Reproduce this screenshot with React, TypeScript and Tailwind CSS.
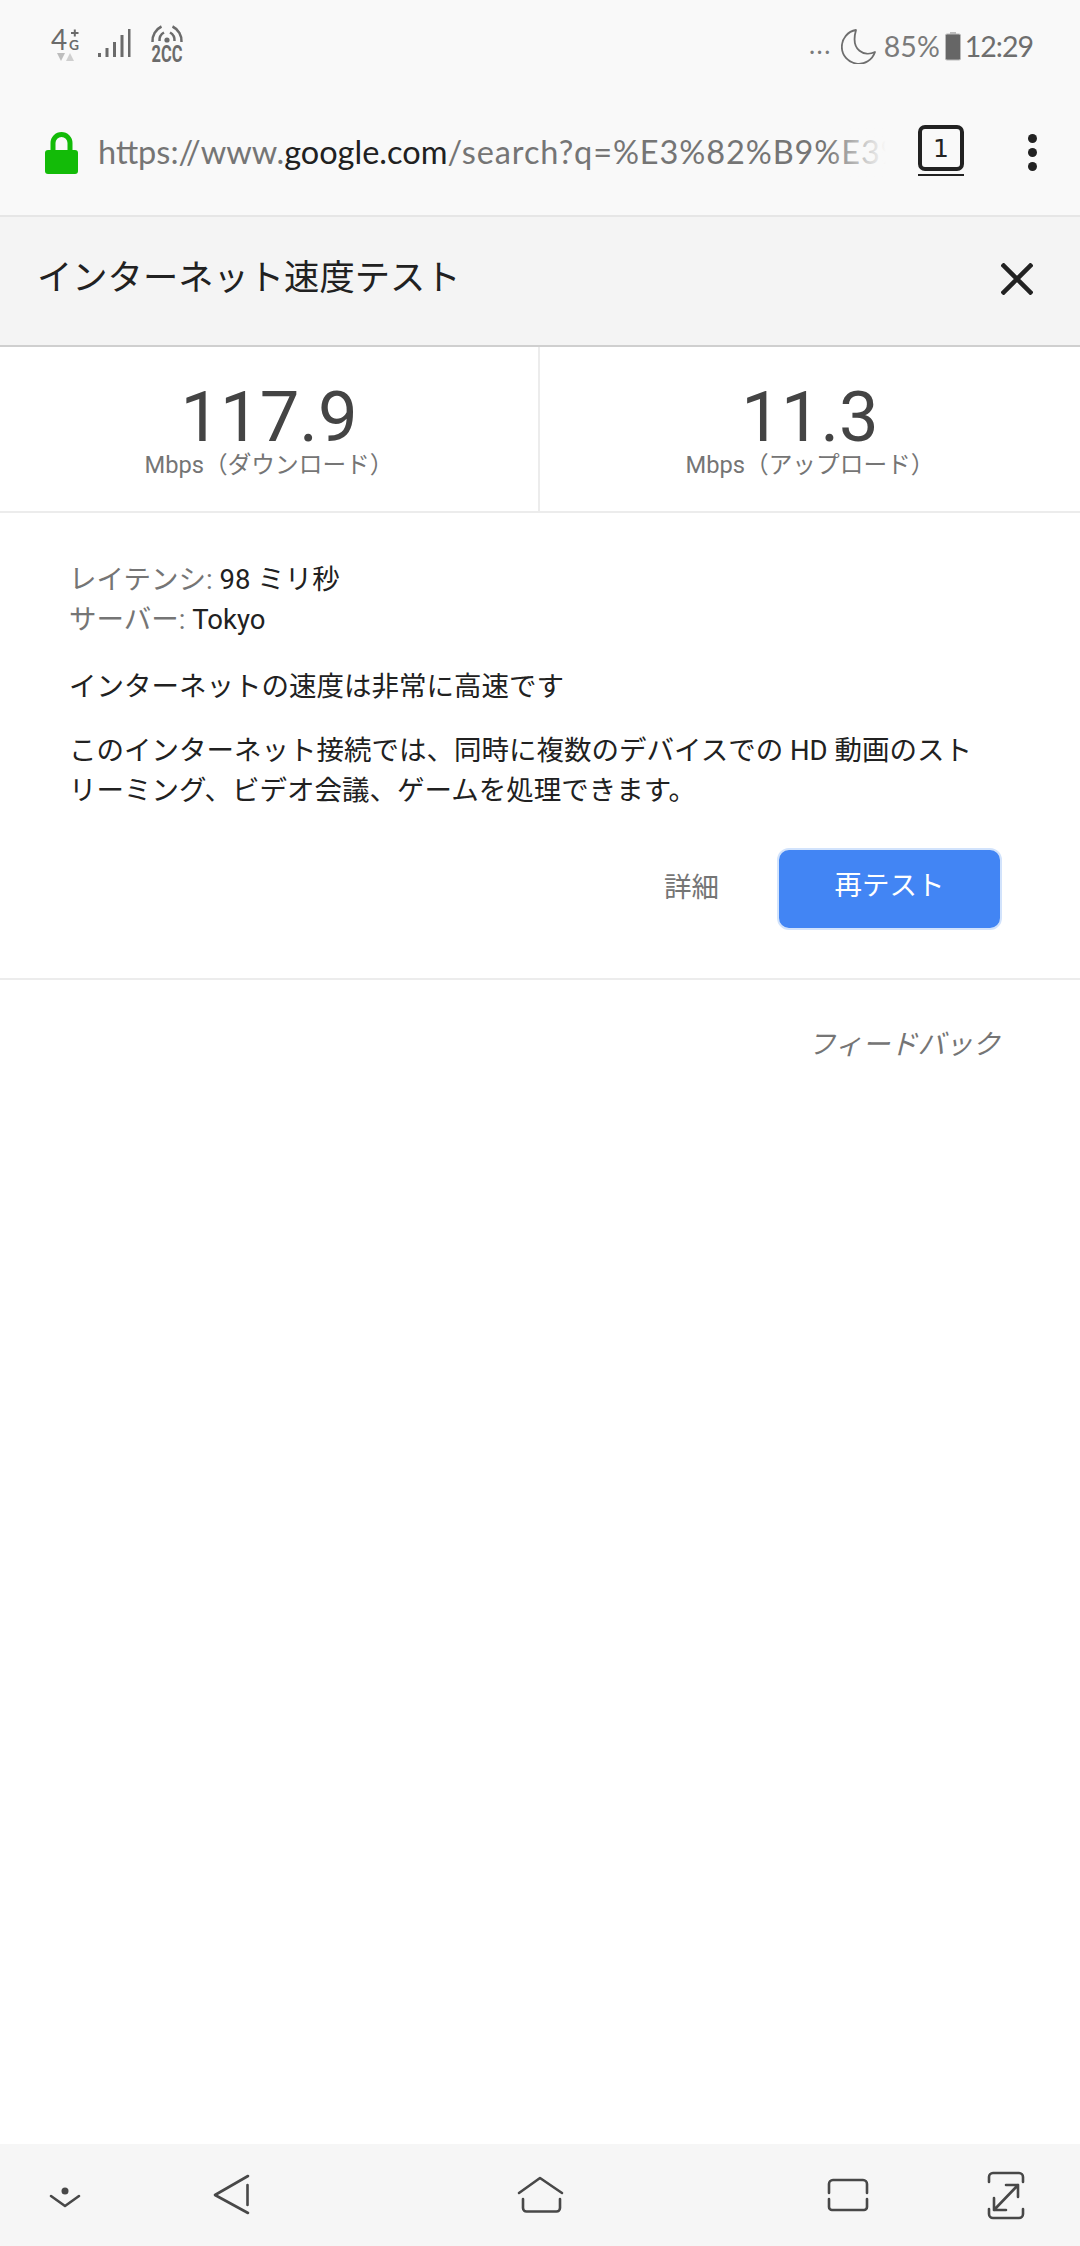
import React from 'react';

const BAR_FONT = "font-['Lato','Noto_Sans',sans-serif]";

const NetworkIcons = () => (
  <svg width="140" height="40" viewBox="0 0 140 40" className="shrink-0 overflow-visible text-[#6b6b6b]">
    <text x="0" y="24" fontSize="28" fontFamily="Lato" fill="currentColor">4</text>
    <text x="18" y="24" fontSize="14" fontWeight="700" fontFamily="Lato" fill="currentColor" textLength="10" lengthAdjust="spacingAndGlyphs">G</text>
    <path d="M20 7h7.500M23.800 3.500v7" stroke="currentColor" strokeWidth="2" />
    <path d="M6 27h8l-4 8z" fill="#bdbdbd" />
    <path d="M15 35h8l-4-8z" fill="#cfcfcf" />
    <g fill="#6b6b6b">
      <rect x="47" y="27" width="3" height="4" />
      <rect x="54.500" y="22" width="3" height="9" />
      <rect x="62" y="16" width="3" height="15" />
      <rect x="69.500" y="9" width="3" height="22" />
      <rect x="77" y="3" width="2.500" height="28" />
    </g>
    <circle cx="116" cy="14" r="2.600" fill="currentColor" />
    <path d="M108.500 15a9 9 0 0 1 4.500-8.500M123.500 15a9 9 0 0 0-4.500-8.500M101.500 16a16 16 0 0 1 9-15.500M130.500 16a16 16 0 0 0-9-15.500" fill="none" stroke="currentColor" strokeWidth="2.500" />
    <text x="100.500" y="36" fontSize="24" fontWeight="700" fontFamily="Roboto" fill="currentColor" textLength="31" lengthAdjust="spacingAndGlyphs">2CC</text>
  </svg>
);

const StatusBar = () => (
  <div className={`flex h-[92px] items-center justify-between pl-[51px] pr-[47px] ${BAR_FONT}`}>
    <NetworkIcons />
    <div className="flex items-center text-[28.500px] text-[#7b7b7b]">
      <span className="mt-[-4px] text-[26px] tracking-[1.500px]">...</span>
      <svg width="36" height="36" viewBox="0 0 36 36" className="ml-[9px]">
        <path d="M15 2A17 17 0 1 0 34 24C24 29 9 23 15 2Z" fill="none" stroke="#6e6e6e" strokeWidth="1.800" strokeLinejoin="round" />
      </svg>
      <span className="ml-[7px]">85%</span>
      <svg width="18" height="30" viewBox="0 0 18 30" className="ml-[4px]">
        <path d="M6 1h6v2H6z" fill="#bbb" />
        <rect x="1.500" y="3" width="15" height="26" rx="1.500" fill="#666" stroke="#bbb" strokeWidth="1" />
      </svg>
      <span className="ml-[3px] tracking-[-1px] text-[#6e6e6e]">12:29</span>
    </div>
  </div>
);

const UrlBar = () => (
  <div className={`flex h-[125px] items-start border-b-2 border-[#e6e6e6] pl-[45px] ${BAR_FONT}`}>
    <svg width="33" height="43" viewBox="0 0 33 43" className="mt-[39px] shrink-0">
      <path d="M8 20V12a8.500 8.500 0 0 1 17 0v8" fill="none" stroke="#13bb08" strokeWidth="5" />
      <rect x="0" y="19" width="33" height="24" rx="3" fill="#13bb08" />
    </svg>
    <div className="relative ml-[20px] mt-[35px] h-[50px] w-[788px] overflow-hidden whitespace-nowrap text-[32.500px] leading-[50px] text-[#757575]">
      https://www.<span className="text-[#212121]">google.com</span>
      <span className="tracking-[0.900px]">/search?q=%E3%82%B9%E3%9</span>
      <div className="absolute inset-y-0 right-0 w-[60px] bg-gradient-to-r from-transparent to-[#f9f9f9]" />
    </div>
    <div className="ml-[32px] mt-[33px] w-[46px] shrink-0">
      <div className="flex h-[46px] w-[46px] items-center justify-center rounded-[7px] border-[4px] border-[#222] font-['DejaVu_Sans',sans-serif] text-[25px] leading-none text-[#222]">1</div>
      <div className="mt-[3px] h-[2px] bg-[#222]" />
    </div>
    <div className="ml-[64px] mt-[42px] flex shrink-0 flex-col gap-[5px]">
      <div className="h-[9px] w-[9px] rounded-full bg-[#222]" />
      <div className="h-[9px] w-[9px] rounded-full bg-[#222]" />
      <div className="h-[9px] w-[9px] rounded-full bg-[#222]" />
    </div>
  </div>
);

const TitleBar = () => (
  <div className="flex h-[130px] items-center justify-between border-b-2 border-[#cfcfcf] bg-[#f4f4f4] pl-[37px] pr-[47px]">
    <h1 className="pb-[6px] text-[35.300px] font-normal leading-[48px] text-[#212121]">インターネット速度テスト</h1>
    <svg width="32" height="32" viewBox="0 0 32 32" className="mb-[4px] text-[#222]" fill="none" stroke="currentColor" strokeWidth="4.500">
      <path d="M1 1l30 30M31 1L1 31" />
    </svg>
  </div>
);

const Stat = ({ value, label, border }: { value: string; label: string; border?: boolean }) => (
  <div className={`flex flex-col items-center pt-[38px] ${border ? 'border-r-2 border-[#ececec]' : ''}`}>
    <div className="text-[70.500px] leading-[64px] text-[#444444]">{value}</div>
    <div className="text-[23.700px] leading-[32px] text-[#757575]">{label}</div>
  </div>
);

const Details = () => (
  <div className="pl-[69px] pt-[47px] text-[27.500px] leading-[40px] text-[#212121]">
    <div>
      <span className="text-[#757575]">レイテンシ: </span>98 ミリ秒
    </div>
    <div>
      <span className="text-[#757575]">サーバー: </span>Tokyo
    </div>
    <p className="mt-[27px]">インターネットの速度は非常に高速です</p>
    <p className="mt-[24px] whitespace-nowrap">
      このインターネット接続では、同時に複数のデバイスでの HD 動画のスト
      <br />
      リーミング、ビデオ会議、ゲームを処理できます。
    </p>
  </div>
);

const Actions = () => (
  <div className="mt-[37px] flex items-center justify-end pr-[78px]">
    <span className="mb-[2px] mr-[58px] text-[27.500px] text-[#757575]">詳細</span>
    <button className="h-[82px] w-[225px] rounded-[12px] border-2 border-[#d2e3fc] bg-[#4285f4] pb-[6px] text-[27.500px] text-white">再テスト</button>
  </div>
);

const Feedback = () => (
  <div className="flex justify-end pr-[80px] pt-[45px] text-[27.500px] leading-[40px] text-[#757575]">
    <span className="italic">フィードバック</span>
  </div>
);

const NavBar = () => (
  <div className="flex h-[102px] shrink-0 items-center bg-[#f6f6f6]">
    <svg width="1080" height="102" viewBox="0 0 1080 102" className="text-[#484848]" fill="none" stroke="currentColor" strokeWidth="2.600" strokeLinecap="round" strokeLinejoin="round">
      <circle cx="65" cy="47" r="3.500" fill="currentColor" stroke="none" />
      <path d="M51 52l14 10 14-10" />
      <path d="M248 32l-33 19 33 18M247.500 41v20" />
      <path d="M519 49l21-15 22 15" />
      <path d="M523 55v9a3.500 3.500 0 0 0 3.500 3.500h30a3.500 3.500 0 0 0 3.500-3.500v-9" />
      <path d="M829 49v-9a4 4 0 0 1 4-4h30a4 4 0 0 1 4 4v9M829 55v8a3 3 0 0 0 3 3h32a3 3 0 0 0 3-3v-8" />
      <path d="M989 38v-5a4 4 0 0 1 4-4h26a4 4 0 0 1 4 4v5M989 65v5a4 4 0 0 0 4 4h26a4 4 0 0 0 4-4v-5" />
      <path d="M994 66l24-25M1006 41h12v12M994 54v12h12" />
    </svg>
  </div>
);

export default function App() {
  return (
    <div className="flex h-[2246px] w-[1080px] flex-col overflow-hidden bg-white font-['Roboto','Noto_Sans_CJK_JP',sans-serif]">
      <div className="bg-[#f9f9f9]">
        <StatusBar />
        <UrlBar />
      </div>
      <TitleBar />
      <div className="grid h-[166px] grid-cols-2 border-b-2 border-[#ececec]">
        <Stat value="117.9" label="Mbps（ダウンロード）" border />
        <Stat value="11.3" label="Mbps（アップロード）" />
      </div>
      <div className="flex-1">
        <Details />
        <Actions />
        <div className="mt-[48px] h-[2px] bg-[#ececec]" />
        <Feedback />
      </div>
      <NavBar />
    </div>
  );
}
